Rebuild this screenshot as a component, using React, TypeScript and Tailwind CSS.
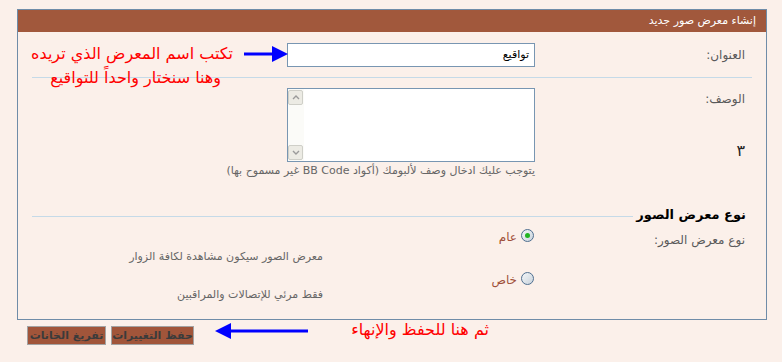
import React from "react";

function Radio({ checked }: { checked?: boolean }) {
  return (
    <span className="relative inline-flex h-[13px] w-[13px] shrink-0 items-center justify-center rounded-full border border-[#4f6f90] bg-gradient-to-br from-[#f4f6f8] to-[#c9d3dc]">
      {checked && <span className="h-[5px] w-[5px] rounded-full bg-[#22b422]" />}
    </span>
  );
}

function Chevron({ up }: { up?: boolean }) {
  return (
    <div className="flex h-[15px] w-[15px] items-center justify-center rounded-[2px] border border-[#cfcfc8] bg-[#ecebe4]">
      <svg width="8" height="5" viewBox="0 0 8 5">
        <path
          d={up ? "M1 4 L4 1 L7 4" : "M1 1 L4 4 L7 1"}
          fill="none"
          stroke="#9a9a9a"
          strokeWidth="1.4"
        />
      </svg>
    </div>
  );
}

export default function App() {
  return (
    <div className="relative min-h-screen bg-[#fbf0ea] pt-[9px] font-['DejaVu_Sans',sans-serif]">
      <div dir="rtl" className="ml-[17px] w-[750px] border border-[#6f8ca8] bg-[#fbf0ea]">
        <div className="h-[22px] bg-[#a1583c] pr-[10px] text-[11px] leading-[22px] text-white">
          إنشاء معرض صور جديد
        </div>

        <div className="flex pt-[11px]">
          <div className="w-[231px] pr-[21px] pt-[3px] text-[12px] text-[#5a5a5a]">العنوان:</div>
          <div className="flex h-[24px] w-[248px] items-center border border-[#7896b2] bg-white pr-[5px] text-[11px] text-black">
            تواقيع
          </div>
        </div>

        <div className="mx-[14px] mt-[10px] h-px bg-[#c5dae8]" />

        <div className="flex pt-[10px]">
          <div className="w-[231px] pr-[21px] pt-[2px] text-[12px] text-[#5a5a5a]">
            <div>الوصف:</div>
            <div className="mt-[33px] text-[16px] leading-[20px] text-[#222]">٣</div>
          </div>
          <div className="flex-1">
            <div className="flex h-[74px] w-[248px] justify-end border border-[#7896b2] bg-white">
              <div className="flex w-[16px] flex-col justify-between bg-[#fbfbf8] p-[1px]">
                <Chevron up />
                <Chevron />
              </div>
            </div>
            <div className="mt-[2px] w-max whitespace-nowrap text-[11px] leading-[14px] text-[#666]">
              يتوجب عليك ادخال وصف لألبومك (أكواد BB Code غير مسموح بها)
            </div>
          </div>
        </div>

        <div className="mt-[28px] flex items-center pr-[20px] pl-[14px]">
          <div className="text-[13px] font-bold leading-[18px] text-black">نوع معرض الصور</div>
          <div className="mr-[3px] mt-[3px] h-px flex-1 bg-[#c5dae8]" />
        </div>

        <div className="flex pt-[3px] pb-[17px]">
          <div className="w-[231px] pr-[21px] pt-[5px] text-[12px] leading-[16px] text-[#5a5a5a]">نوع معرض الصور:</div>
          <div className="flex-1">
            <div className="flex h-[16px] items-center gap-[4px] pr-[1px] text-[12px] leading-[16px] text-[#a0503a]">
              <Radio checked />
              <span className="pt-[3px]">عام</span>
            </div>
            <div className="pr-[212px] pt-[7px] text-[11px] leading-[14px] text-[#666]">
              معرض الصور سيكون مشاهدة لكافة الزوار
            </div>
            <div className="mt-[6px] flex h-[16px] items-center gap-[4px] pr-[1px] text-[12px] leading-[16px] text-[#a0503a]">
              <Radio />
              <span className="pt-[3px]">خاص</span>
            </div>
            <div className="pr-[212px] pt-[2px] text-[11px] leading-[14px] text-[#666]">
              فقط مرئي للإتصالات والمراقبين
            </div>
          </div>
        </div>
      </div>

      <div className="ml-[27px] mt-[6px] flex gap-[5px]">
        <button className="h-[19px] w-[79px] border border-[#a3a3a3] bg-[#a1553a] text-[11px] font-bold leading-none text-[#3b3b3b]">
          تفريغ الخانات
        </button>
        <button className="h-[19px] w-[83px] border border-[#a3a3a3] bg-[#a1553a] text-[11px] font-bold leading-none text-[#3b3b3b]">
          حفظ التغييرات
        </button>
      </div>

      <div dir="rtl" className="absolute left-[35px] top-[42px] w-[198px] whitespace-nowrap text-right text-[16px] text-[#ff0000]">
        تكتب اسم المعرض الذي تريده
      </div>
      <div dir="rtl" className="absolute left-[40px] top-[66px] w-[181px] whitespace-nowrap text-right text-[16px] text-[#ff0000]">
        وهنا سنختار واحداً للتواقيع
      </div>
      <div className="absolute left-[244px] top-[46px]">
        <svg width="44" height="16" viewBox="0 0 44 16">
          <rect x="0" y="6.5" width="30" height="3" fill="#0000ff" />
          <path d="M28 0 L44 8 L28 16 Z" fill="#0000ff" />
        </svg>
      </div>

      <div dir="rtl" className="absolute left-[350px] top-[318px] w-[139px] whitespace-nowrap text-right text-[16px] text-[#ff0000]">
        ثم هنا للحفظ والإنهاء
      </div>
      <div className="absolute left-[215px] top-[323px]">
        <svg width="93" height="16" viewBox="0 0 93 16">
          <path d="M0 8 L16 0 L16 16 Z" fill="#0000ff" />
          <rect x="14" y="6.5" width="79" height="3" fill="#0000ff" />
        </svg>
      </div>
    </div>
  );
}
